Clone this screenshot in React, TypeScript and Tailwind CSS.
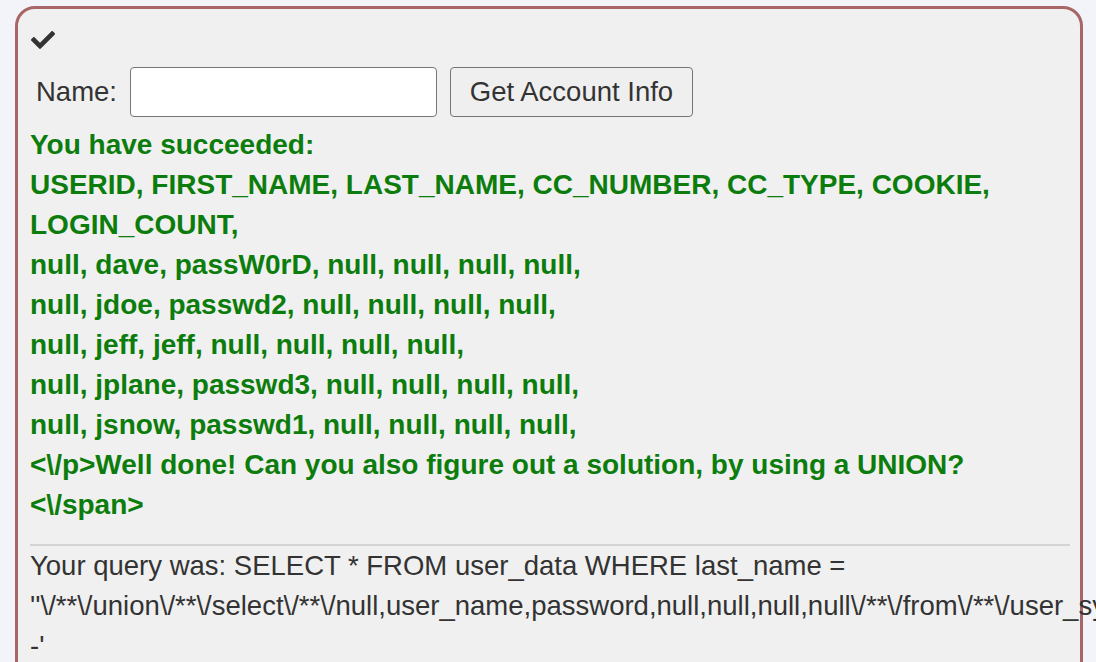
import { FaCheck } from "react-icons/fa";

const rows = [
  "null, dave, passW0rD, null, null, null, null,",
  "null, jdoe, passwd2, null, null, null, null,",
  "null, jeff, jeff, null, null, null, null,",
  "null, jplane, passwd3, null, null, null, null,",
  "null, jsnow, passwd1, null, null, null, null,",
];

export default function App() {
  return (
    <div
      className="min-h-screen bg-[#f3f4f9] pl-[15px] pr-[13px] pt-[6px] text-[#333]"
      style={{ fontFamily: "'Liberation Sans', Arial, sans-serif" }}
    >
      <div className="rounded-[20px] border-[3px] border-[#a86666] bg-[#f0f0f0] pl-[12px] pr-[10px] pt-[19px] pb-[40px]">
        {/* status icon */}
        <FaCheck className="ml-[1px] h-[24px] w-[24px] text-[#333]" />

        <form className="mt-[15px] flex items-center gap-[13px]">
          <label className="ml-[6px] text-[27.5px]">Name:</label>
          <input
            type="text"
            className="h-[50px] w-[307px] rounded-[4px] border-[1.5px] border-[#767676] bg-white px-2 text-[24px] outline-none"
          />
          <button
            type="button"
            className="h-[50px] w-[243px] rounded-[4px] border-[1.5px] border-[#767676] bg-[#efefef] text-[27.5px] text-[#333]"
          >
            Get Account Info
          </button>
        </form>

        <div className="mt-[8px] text-[28px] font-bold leading-[40px] text-[#0c7d0c]">
          <p>You have succeeded:</p>
          <p>USERID, FIRST_NAME, LAST_NAME, CC_NUMBER, CC_TYPE, COOKIE,</p>
          <p>LOGIN_COUNT,</p>
          {rows.map((r) => (
            <p key={r}>{r}</p>
          ))}
          <p>{"<\\/p>Well done! Can you also figure out a solution, by using a UNION?"}</p>
          <p>{"<\\/span>"}</p>
        </div>

        <hr className="mt-[19px] border-t-2 border-[#d4d4d4]" />

        <div className="text-[27.5px] leading-[40px]">
          <p>Your query was: SELECT * FROM user_data WHERE last_name =</p>
          <p className="whitespace-nowrap">
            {"''\\/**\\/union\\/**\\/select\\/**\\/null,user_name,password,null,null,null,null\\/**\\/from\\/**\\/user_system_data\\/**\\/-"}
          </p>
          <p>-'</p>
        </div>
      </div>
    </div>
  );
}
